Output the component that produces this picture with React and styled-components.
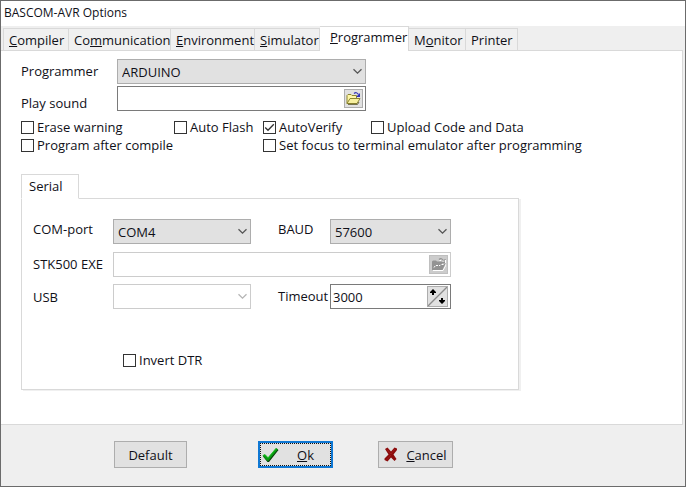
import React, { useState } from 'react';
import styled, { createGlobalStyle, css } from 'styled-components';

const GlobalStyle = createGlobalStyle`
  *, *::before, *::after { box-sizing: border-box; }
  body { margin: 0; background: #fff; }
  button, input, select { font: inherit; color: inherit; margin: 0; }
`;

const Desktop = styled.div`
  padding: 0 5px 3px 0;
  font: 13px/18px "Open Sans", "Noto Sans", sans-serif;
  color: #101018;
`;

const Dialog = styled.main`
  background: #efefef;
  border: 1px solid #6b6b6b;
`;

const TitleBar = styled.h1`
  margin: 0;
  height: 25px;
  padding: 3px;
  background: #fff;
  font-size: 12px;
  line-height: 18px;
  font-weight: 400;
`;

const TabStrip = styled.div`
  display: flex;
  align-items: flex-end;
  padding-left: 2px;
`;

const Tab = styled.button`
  width: ${(p) => p.$width}px;
  height: 22px;
  padding: 0 0 0 5px;
  border: 1px solid #d9d9d9;
  border-width: 1px 1px 0 0;
  background: #f0f0f0;
  text-align: left;
  white-space: nowrap;
  &:first-child { border-left-width: 1px; }
  ${(p) =>
    p.$active &&
    css`
      height: 25px;
      padding: 0 0 4px 10px;
      margin-bottom: -1px;
      background: #fff;
      z-index: 1;
    `}
`;

const Page = styled.section`
  margin: 0 2px 0 0;
  padding: 8px 20px 34px;
  background: #fff;
  border: 1px solid #d9d9d9;
  border-left-width: 0;
`;

const FieldGrid = styled.div`
  display: grid;
  grid-template-columns: 96px minmax(0, 249px);
  row-gap: 2px;
`;

const Label = styled.label`
  padding-top: ${(p) => p.$drop || 3}px;
  white-space: nowrap;
`;

const SelectFrame = styled.div`
  display: grid;
  align-items: center;
  height: 25px;
  color: ${(p) => (p.$off ? '#b5b5b5' : '#555')};
  > * { grid-area: 1 / 1; }
  > svg { justify-self: end; margin-right: 3px; pointer-events: none; }
`;

const Select = styled.select`
  appearance: none;
  width: 100%;
  height: 25px;
  padding: 1px 20px 0 4px;
  border: 1px solid #adadad;
  border-radius: 0;
  background: #e1e1e1;
  color: #101018;
  &:disabled { background: #fff; border-color: #ccc; opacity: 1; }
`;

const InputFrame = styled.div`
  display: flex;
  align-items: center;
  height: 25px;
  padding-right: 2px;
  border: 1px solid ${(p) => (p.$off ? '#ccc' : '#7a7a7a')};
  background: #fff;
`;

const TextInput = styled.input`
  flex: 1;
  min-width: 0;
  height: 21px;
  padding: 0 2px;
  border: 0;
  background: transparent;
  outline: 0;
`;

const GlyphButton = styled.button`
  display: grid;
  place-items: center;
  width: ${(p) => p.$width || 19}px;
  height: ${(p) => p.$height || 19}px;
  padding: 0;
  border: 1px solid #adadad;
  background: #e1e1e1;
  &:disabled { background: #ccc; border-color: #bfbfbf; }
`;

const CheckGrid = styled.div`
  display: grid;
  grid-template-columns: 153px 89px 108px auto;
  justify-content: start;
  margin-top: 6px;
`;

const CheckLabel = styled.label`
  display: flex;
  align-items: center;
  gap: 3px;
  height: 18px;
  white-space: nowrap;
  grid-column: ${(p) => p.$column || 'auto'};
`;

const CheckFrame = styled.span`
  display: grid;
  > * { grid-area: 1 / 1; }
  > svg { display: none; pointer-events: none; }
  > input:checked + svg { display: block; }
`;

const CheckInput = styled.input`
  appearance: none;
  width: 13px;
  height: 13px;
  border: 1px solid #333;
  background: #fff;
`;

const SerialTab = styled.button`
  display: block;
  width: 58px;
  height: 25px;
  margin: 20px 0 -1px;
  padding: 0 0 1px 7px;
  border: 1px solid #d9d9d9;
  border-bottom-color: #fff;
  background: #fff;
  text-align: left;
  position: relative;
`;

const SerialPage = styled.section`
  max-width: 498px;
  padding: 20px 11px 20px;
  border: 1px solid #d9d9d9;
  box-shadow: 2px 1px 0 #f0f0f0;
`;

const SerialGrid = styled.div`
  display: grid;
  grid-template-columns: 80px 138px 27px 52px 121px;
  grid-template-rows: 33px 32px 25px;
`;

const Cell = styled.div`
  grid-column: ${(p) => p.$column};
`;

const LabelCell = styled(Label)`
  grid-column: ${(p) => p.$column};
`;

const InvertRow = styled.div`
  padding: 42px 0 0 90px;
`;

const ButtonBar = styled.footer`
  display: flex;
  padding: 16px 20px 18px 113px;
`;

const PushButton = styled.button`
  display: flex;
  align-items: center;
  justify-content: center;
  gap: ${(p) => p.$gap || 0}px;
  width: ${(p) => p.$width}px;
  height: 27px;
  margin-right: ${(p) => p.$after || 0}px;
  padding: 0;
  border: 1px solid #adadad;
  background: #e1e1e1;
  ${(p) =>
    p.$primary &&
    css`
      justify-content: flex-start;
      padding-left: 2px;
      border: 2px solid #0f78d4;
      outline: 1px dotted #111;
      outline-offset: -3px;
    `}
`;

const Chevron = () => (
  <svg width="11" height="7" viewBox="0 0 11 7" fill="none" stroke="currentColor" strokeWidth="1.3">
    <path d="M1.5 1.2 5.5 5.2 9.5 1.2" />
  </svg>
);

const FolderIcon = () => (
  <svg width="15" height="13" viewBox="0 0 15 13">
    <path d="M1 11.5V3.5L2 2.5H5L6 3.5H10.5V6" fill="#fff7a6" stroke="#8c8530" />
    <path d="M1 11.5 4 6.5H14L11 11.5Z" fill="#f7f0a0" stroke="#8c8530" />
    <path d="M2 12.4H11.5L13 10" fill="none" stroke="#4a4518" strokeWidth=".8" />
    <path d="M8 1.5Q10.5-.5 12.5 2.5" fill="none" stroke="#3434b8" strokeWidth="1.2" />
    <path d="M14 1V5H10Z" fill="#3434b8" />
  </svg>
);

const FolderOffIcon = () => (
  <svg width="15" height="13" viewBox="0 0 15 13">
    <path d="M2 12.5H12L15 7V6" fill="none" stroke="#fff" />
    <path d="M1 12V3.5L2 2.5H5L6 3.5H11V5.5H14.5L11.5 12Z" fill="#939393" />
    <path d="M3 9.5 4.5 7.5H9L10 6.5H13" fill="none" stroke="#fff" strokeDasharray="2 1" />
    <path d="M8 1.5Q10.5-.5 12.5 2.5M14 1V4.5H11" fill="none" stroke="#939393" strokeWidth="1.2" />
    <path d="M8.5 2.5H10M14.5 2V5" stroke="#fff" />
  </svg>
);

const SpinIcon = () => (
  <svg width="19" height="19" viewBox="0 0 19 19">
    <path d="M0 19 19 0" stroke="#8c8c8c" strokeWidth="1.3" />
    <path d="M5 2 8 5V6H6V8H4V6H2V5ZM14 17 11 14V13H13V11H15V13H17V14Z" fill="#000" />
  </svg>
);

const TickMark = () => (
  <svg width="13" height="13" viewBox="0 0 13 13" fill="none" stroke="#333" strokeWidth="1.3">
    <path d="M2.2 6.5 5 9.3 10.8 3.3" />
  </svg>
);

const OkIcon = () => (
  <svg width="17" height="16" viewBox="0 0 17 16">
    <path d="M1 9.5 3.5 8 6.5 11 14.5 1.5 16.5 3 7 15H5.5Z" fill="#063c06" />
    <path d="M.5 8.5 3 7.2 6 10.5 14 1 16 2.2 6.5 13.7H5Z" fill="#0b9a12" />
    <path d="M1 8.5 2.8 7.7 6 11 14 1.5" fill="none" stroke="#20cf27" strokeWidth=".8" />
  </svg>
);

const CancelIcon = () => (
  <svg width="14" height="15" viewBox="0 0 14 15">
    <path d="M1 2 3.5 .5 7 4.5 10.5 .5 13 1.5V3L9.5 7.5 12.5 12 10.5 14 7 10.5 3.5 14.5 .5 13V11.5L4.5 7.5Z" fill="#8b0b0b" />
    <path d="M3 2.5 7 7 11 2M7 8 3 12.5" fill="none" stroke="#a01818" />
  </svg>
);

const TABS = [
  { before: '', key: 'C', after: 'ompiler', width: 66 },
  { before: 'Co', key: 'm', after: 'munication', width: 102 },
  { before: '', key: 'E', after: 'nvironment', width: 84 },
  { before: '', key: 'S', after: 'imulator', width: 65 },
  { before: '', key: 'P', after: 'rogrammer', width: 89 },
  { before: 'M', key: 'o', after: 'nitor', width: 57 },
  { before: 'Printer', key: '', after: '', width: 52 },
];

function Check({ label, column, initial = false }) {
  const [on, setOn] = useState(initial);
  return (
    <CheckLabel $column={column}>
      <CheckFrame>
        <CheckInput type="checkbox" checked={on} onChange={() => setOn(!on)} />
        <TickMark />
      </CheckFrame>
      {label}
    </CheckLabel>
  );
}

function DropDown({ id, value, disabled }) {
  return (
    <SelectFrame $off={disabled}>
      <Select id={id} disabled={disabled} defaultValue={value}>
        <option value={value}>{value}</option>
      </Select>
      <Chevron />
    </SelectFrame>
  );
}

export default function App() {
  return (
    <Desktop>
      <GlobalStyle />
      <Dialog>
        <TitleBar>BASCOM-AVR Options</TitleBar>
        <TabStrip role="tablist">
          {TABS.map((t, i) => (
            <Tab key={i} type="button" role="tab" aria-selected={i === 4} $width={t.width} $active={i === 4}>
              {t.before}
              {t.key && <u>{t.key}</u>}
              {t.after}
            </Tab>
          ))}
        </TabStrip>
        <Page>
          <FieldGrid>
            <Label htmlFor="programmer">Programmer</Label>
            <DropDown id="programmer" value="ARDUINO" />
            <Label htmlFor="sound" $drop={8}>Play sound</Label>
            <InputFrame>
              <TextInput id="sound" type="text" />
              <GlyphButton type="button" aria-label="Browse for sound"><FolderIcon /></GlyphButton>
            </InputFrame>
          </FieldGrid>
          <CheckGrid>
            <Check label="Erase warning" />
            <Check label="Auto Flash" />
            <Check label="AutoVerify" initial />
            <Check label="Upload Code and Data" />
            <Check label="Program after compile" column="1 / 3" />
            <Check label="Set focus to terminal emulator after programming" column="3 / 5" />
          </CheckGrid>
          <SerialTab type="button" role="tab" aria-selected="true">Serial</SerialTab>
          <SerialPage>
            <SerialGrid>
              <LabelCell htmlFor="port" $drop={1}>COM-port</LabelCell>
              <DropDown id="port" value="COM4" />
              <LabelCell htmlFor="baud" $column="4" $drop={1}>BAUD</LabelCell>
              <DropDown id="baud" value="57600" />
              <LabelCell htmlFor="stk" $column="1" $drop={3}>STK500 EXE</LabelCell>
              <Cell $column="2 / 6">
                <InputFrame $off>
                  <TextInput id="stk" type="text" disabled />
                  <GlyphButton type="button" aria-label="Browse for STK500" disabled><FolderOffIcon /></GlyphButton>
                </InputFrame>
              </Cell>
              <LabelCell htmlFor="usb" $column="1" $drop={4}>USB</LabelCell>
              <DropDown id="usb" value="" disabled />
              <LabelCell htmlFor="timeout" $column="4" $drop={3}>Timeout</LabelCell>
              <InputFrame>
                <TextInput id="timeout" type="text" defaultValue="3000" />
                <GlyphButton type="button" aria-label="Change timeout" $width={21} $height={21}><SpinIcon /></GlyphButton>
              </InputFrame>
            </SerialGrid>
            <InvertRow>
              <Check label="Invert DTR" />
            </InvertRow>
          </SerialPage>
        </Page>
        <ButtonBar>
          <PushButton type="button" $width={73} $after={71}>Default</PushButton>
          <PushButton type="button" $primary $width={75} $after={45} $gap={18}>
            <OkIcon />
            <span><u>O</u>k</span>
          </PushButton>
          <PushButton type="button" $width={75} $gap={8}>
            <CancelIcon />
            <span><u>C</u>ancel</span>
          </PushButton>
        </ButtonBar>
      </Dialog>
    </Desktop>
  );
}
